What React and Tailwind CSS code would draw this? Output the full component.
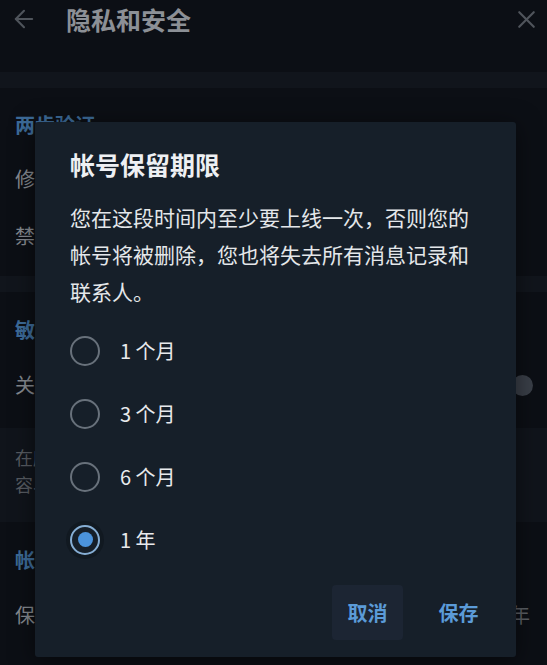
import React from "react";
import { ArrowLeft, X } from "lucide-react";

const font = { fontFamily: '"Noto Sans CJK SC", "Noto Sans", sans-serif' };

function Radio({ label, checked }) {
  return (
    <div className="flex h-[63px] items-center">
      {checked ? (
        <div className="flex h-[30px] w-[30px] items-center justify-center rounded-full border-[2.5px] border-[#86aed4] shadow-[0_0_0_4px_rgba(10,14,20,0.35)]">
          <div className="h-[15px] w-[15px] rounded-full bg-[#4b93dc]" />
        </div>
      ) : (
        <div className="h-[30px] w-[30px] rounded-full border-[2.5px] border-[#68717b]" />
      )}
      <span className="ml-[20px] text-[20px] leading-none text-[#e8eaed]">{label}</span>
    </div>
  );
}

export default function App() {
  return (
    <div className="relative h-[665px] w-[547px] overflow-hidden bg-[#0c0f15]" style={font}>
      {/* background page */}
      <div className="flex h-full flex-col">
        <div className="flex h-[72px] shrink-0 items-start pt-[3px]">
          <div className="flex h-[32px] w-[66px] items-center pl-[10px]">
            <ArrowLeft size={28} strokeWidth={1.8} color="#4f545b" />
          </div>
          <div className="h-[32px] text-[25px] font-bold leading-[32px] text-[#8c9096]">隐私和安全</div>
          <div className="ml-auto flex h-[32px] items-center pr-[6px]">
            <X size={29} strokeWidth={1.8} color="#50555c" />
          </div>
        </div>
        <div className="h-[16px] shrink-0 bg-[#11151c]" />
        <div className="flex h-[188px] shrink-0 flex-col px-[15px] pt-[26px]">
          <div className="text-[20px] font-bold leading-[22px] text-[#3d6b99]">两步验证</div>
          <div className="mt-[32px] text-[20px] leading-[22px] text-[#85898f]">修改</div>
          <div className="mt-[35px] text-[20px] leading-[22px] text-[#85898f]">禁用</div>
        </div>
        <div className="h-[16px] shrink-0 bg-[#11151c]" />
        <div className="flex h-[136px] shrink-0 flex-col px-[15px] pt-[27px]">
          <div className="text-[20px] font-bold leading-[22px] text-[#3d6b99]">敏感</div>
          <div className="mt-[33px] flex items-center justify-between">
            <span className="text-[20px] leading-[22px] text-[#85898f]">关闭</span>
            <div className="flex h-[14px] w-[40px] items-center justify-end rounded-full bg-[#1b2028]">
              <div className="-mr-[1px] h-[21px] w-[21px] rounded-full bg-[#3a3f48]" />
            </div>
          </div>
        </div>
        <div className="flex h-[94px] shrink-0 flex-col bg-[#10141b] px-[15px] pt-[16px]">
          <div className="text-[18px] leading-[27px] text-[#575b61]">在所</div>
          <div className="text-[18px] leading-[27px] text-[#575b61]">容易</div>
        </div>
        <div className="flex flex-1 flex-col px-[15px] pt-[27px]">
          <div className="text-[20px] font-bold leading-[22px] text-[#3d6b99]">帐号</div>
          <div className="mt-[33px] flex items-center justify-between">
            <span className="text-[20px] leading-[22px] text-[#85898f]">保留</span>
            <span className="pr-[2px] text-[20px] leading-[22px] text-[#5b5f65]">1 年</span>
          </div>
        </div>
      </div>

      {/* modal */}
      <div className="absolute inset-0 pl-[35px] pt-[122px]">
        <div className="flex h-[535px] w-[481px] flex-col rounded-[3px] bg-[#161f29] pl-[35px] pr-[22px] pt-[25px] shadow-[0_4px_24px_rgba(0,0,0,0.5)]">
          <div className="text-[25px] font-bold leading-[34px] text-[#eef0f3]">帐号保留期限</div>
          <div className="mt-[18px] text-[21px] leading-[37px] text-[#e4e7ea]">
            <div>您在这段时间内至少要上线一次，否则您的</div>
            <div>帐号将被删除，您也将失去所有消息记录和</div>
            <div>联系人。</div>
          </div>
          <div className="mt-[9px] flex flex-col">
            <Radio label="1 个月" />
            <Radio label="3 个月" />
            <Radio label="6 个月" />
            <Radio label="1 年" checked />
          </div>
          <div className="mt-[14px] flex justify-end gap-[20px]">
            <button className="flex h-[55px] w-[71px] items-center justify-center rounded-[4px] bg-[#1c2533] text-[20px] font-bold text-[#5b9bd8]">
              取消
            </button>
            <button className="flex h-[55px] w-[71px] items-center justify-center rounded-[4px] text-[20px] font-bold text-[#5b9bd8]">
              保存
            </button>
          </div>
        </div>
      </div>
    </div>
  );
}
